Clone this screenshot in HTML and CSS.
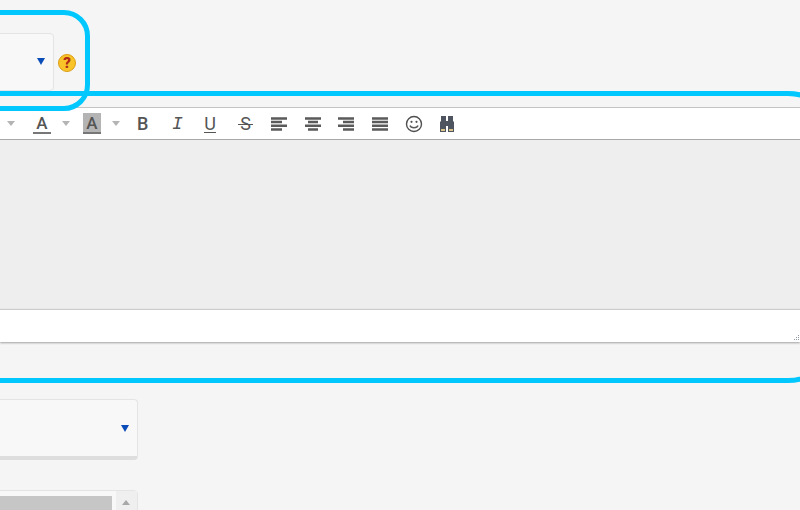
FILE: index.html
```html
<!DOCTYPE html>
<html lang="en">
<head>
    <meta charset="UTF-8">
    <meta name="viewport" content="width=device-width, initial-scale=1.0">
    <title>Editor settings</title>
    <link rel="stylesheet" href="styles.css">
</head>
<body>
    <div class="page">
        <div class="field-row">
            <div class="select select-top"><span class="select-arrow"></span></div>
            <span class="help">?</span>
        </div>

        <div class="editor">
            <div class="toolbar">
                <span class="drop drop-first"></span>
                <span class="color-btn">A</span>
                <span class="drop"></span>
                <span class="color-btn color-btn-bg">A</span>
                <span class="drop drop-last"></span>
                <span class="tool tool-bold">B</span>
                <span class="tool tool-italic">I</span>
                <span class="tool tool-underline">U</span>
                <span class="tool tool-strike">S</span>
                <span class="tool">
                    <svg width="16" height="14" viewBox="0 0 16 14"><path d="M0 1.500h16M0 5h11M0 8.800h16M0 12.500h11"/></svg>
                </span>
                <span class="tool">
                    <svg width="16" height="14" viewBox="0 0 16 14"><path d="M0 1.500h16M3 5h10M0 8.800h16M3 12.500h10"/></svg>
                </span>
                <span class="tool">
                    <svg width="16" height="14" viewBox="0 0 16 14"><path d="M0 1.500h16M5 5h11M0 8.800h16M5 12.500h11"/></svg>
                </span>
                <span class="tool">
                    <svg width="16" height="14" viewBox="0 0 16 14"><path d="M0 1.500h16M0 5h16M0 8.800h16M0 12.500h16"/></svg>
                </span>
                <span class="tool">
                    <svg class="smiley" width="18" height="18" viewBox="0 0 18 18">
                        <circle cx="9" cy="9" r="7.500"/>
                        <path d="M5 10.500c1 3 7 3 8 0"/>
                        <circle class="eye" cx="6.500" cy="6.800" r="1.100"/>
                        <circle class="eye" cx="11.500" cy="6.800" r="1.100"/>
                    </svg>
                </span>
                <span class="tool">
                    <svg width="18" height="18" viewBox="0 0 18 18">
                        <path class="binoc" d="M3 1h5v5h2V1h5v5l1 1v10h-6v-6H8v6H2V7l1-1z"/>
                        <path class="binoc-lens" d="M3 14h4v2H3zM11 14h4v2h-4z"/>
                    </svg>
                </span>
            </div>
            <div class="edit-area"></div>
            <div class="status-bar">
                <svg class="grip" width="6" height="8" viewBox="0 0 6 8">
                    <path d="M0 6h1v1H0zM2 6h1v1H2zM4 6h1v1H4zM2 4h1v1H2zM4 4h1v1H4zM4 2h1v1H4z"/>
                </svg>
            </div>
        </div>

        <div class="select select-wide"><span class="select-arrow"></span></div>

        <div class="listbox">
            <div class="list-items"><div class="list-item"></div></div>
            <div class="scroll"><span class="scroll-up"></span></div>
        </div>

        <div class="highlight highlight-select"></div>
        <div class="highlight highlight-editor"></div>
    </div>
</body>
</html>
```

FILE: styles.css
```css
body {
    margin: 0;
    background-color: #f5f5f5;
    font-family: Roboto, "Liberation Sans", sans-serif;
}

.page {
    position: relative;
    height: 510px;
    overflow: hidden;
    padding-top: 33px;
    box-sizing: border-box;
}

/* selects run off the left side of the page */
.field-row {
    display: flex;
    align-items: center;
    margin-bottom: 16px;
}

.select {
    display: flex;
    align-items: center;
    justify-content: flex-end;
    box-sizing: border-box;
    margin-left: -20px;
    background-color: #f8f8f8;
    border: 1px solid #e4e4e4;
    border-radius: 4px;
}

.select-top {
    width: 74px;
    height: 58px;
    padding: 0 8px 2px 0;
}

.select-wide {
    width: 158px;
    height: 61px;
    margin-top: 57px;
    padding: 0 8px 0 0;
    border-bottom: 4px solid #dedede;
}

.select-arrow {
    width: 0;
    height: 0;
    border-left: 4px solid transparent;
    border-right: 4px solid transparent;
    border-top: 7px solid #0b4db8;
}

.help {
    display: flex;
    align-items: center;
    justify-content: center;
    box-sizing: border-box;
    width: 18px;
    height: 18px;
    margin: 2px 0 0 4px;
    border: 1px solid #dc9c14;
    border-radius: 50%;
    background-color: #f9c428;
    color: #b02c18;
    font-size: 15px;
    font-weight: 900;
    line-height: 1;
}

.editor {
    display: flex;
    flex-direction: column;
}

.toolbar {
    display: flex;
    align-items: center;
    height: 33px;
    box-sizing: border-box;
    background-color: #fff;
    border-top: 1px solid #c4c4c4;
    border-bottom: 1px solid #a8a8a8;
    box-shadow: 0 1px 1px rgba(0, 0, 0, 0.12);
}

.drop {
    width: 0;
    height: 0;
    margin-left: 11px;
    border-left: 4.500px solid transparent;
    border-right: 4.500px solid transparent;
    border-top: 5px solid #b4b4b4;
}

.drop-first {
    margin-left: 7px;
    margin-right: 18px;
}

.drop-first + .color-btn {
    margin-left: 0;
}

.drop-last {
    margin-right: 8px;
}

.color-btn {
    width: 18px;
    height: 19px;
    margin: 0 0 0 13px;
    border-bottom: 2px solid #777;
    color: #555;
    font-size: 17px;
    font-weight: 500;
    line-height: 20px;
    text-align: center;
}

.color-btn-bg {
    background-color: #b4b4b4;
}

.tool {
    position: relative;
    display: flex;
    align-items: center;
    justify-content: center;
    box-sizing: border-box;
    width: 33.600px;
    height: 24px;
    flex-shrink: 0;
    color: #555;
    font-size: 18px;
    line-height: 24px;
}

.tool svg path {
    fill: none;
    stroke: #5a5a5a;
    stroke-width: 2.500;
}

.tool-bold {
    padding-right: 4px;
    font-weight: 500;
}

.tool-italic {
    padding-right: 2px;
    font-family: "Liberation Mono", monospace;
    font-style: italic;
}

.tool-underline {
    padding-right: 4px;
}

.tool-underline::after {
    content: "";
    position: absolute;
    left: 9px;
    right: 13px;
    top: 20px;
    height: 1px;
    background-color: #555;
}

.tool-strike::after {
    content: "";
    position: absolute;
    left: 9px;
    right: 9px;
    top: 12px;
    height: 1px;
    background-color: #555;
}

.smiley circle {
    fill: none;
    stroke: #505050;
    stroke-width: 1.400;
}

.tool .smiley path {
    stroke-width: 1.400;
}

.smiley .eye {
    fill: #505050;
    stroke: none;
}

.tool svg .binoc {
    fill: #4f5560;
    stroke: none;
}

.tool svg .binoc-lens {
    fill: #d9c48a;
    stroke: none;
}

.edit-area {
    height: 169px;
    background-color: #eee;
}

.status-bar {
    display: flex;
    align-items: flex-end;
    justify-content: flex-end;
    height: 33px;
    box-sizing: border-box;
    background-color: #fff;
    border-top: 1px solid #ccc;
    box-shadow: 0 1px 2px rgba(0, 0, 0, 0.35);
}

.grip {
    margin-bottom: 1px;
}

.grip path {
    fill: #8d9aa5;
}

.listbox {
    display: flex;
    box-sizing: border-box;
    width: 158px;
    height: 60px;
    margin: 30px 0 0 -20px;
    background-color: #f8f8f8;
    border: 1px solid #e4e4e4;
    border-radius: 4px;
}

.list-items {
    flex: 1;
    padding: 5px 4px 0 0;
}

.list-item {
    height: 40px;
    background-color: #c6c6c6;
}

.scroll {
    display: flex;
    justify-content: center;
    width: 21px;
    background-color: #efefef;
}

.scroll-up {
    width: 0;
    height: 0;
    margin: 9px 1px 0 0;
    border-left: 4.500px solid transparent;
    border-right: 4.500px solid transparent;
    border-bottom: 5px solid #a8a8a8;
}

/* annotation outlines drawn over the form */
.highlight {
    position: absolute;
    box-sizing: border-box;
    border: 5px solid #00c8ff;
}

.highlight-select {
    left: -100px;
    top: 10px;
    width: 190px;
    height: 101px;
    border-radius: 26px;
}

.highlight-editor {
    left: -50px;
    top: 91px;
    width: 888px;
    height: 292px;
    border-radius: 50px;
}
```
